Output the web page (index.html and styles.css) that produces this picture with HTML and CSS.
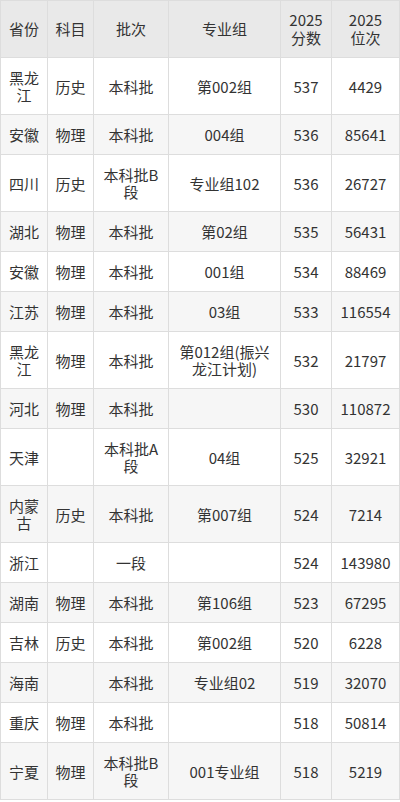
FILE: index.html
```html
<!DOCTYPE html>
<html lang="zh-CN">
<head>
<meta charset="utf-8">
<link rel="stylesheet" href="styles.css">
</head>
<body>
<table class="score-table">
  <colgroup>
    <col class="c1"><col class="c2"><col class="c3"><col class="c4"><col class="c5"><col class="c6">
  </colgroup>
  <thead>
    <tr><th>省份</th><th>科目</th><th>批次</th><th>专业组</th><th>2025<br>分数</th><th>2025<br>位次</th></tr>
  </thead>
  <tbody>
    <tr><td>黑龙江</td><td>历史</td><td>本科批</td><td>第002组</td><td>537</td><td>4429</td></tr>
    <tr><td>安徽</td><td>物理</td><td>本科批</td><td>004组</td><td>536</td><td>85641</td></tr>
    <tr><td>四川</td><td>历史</td><td>本科批B段</td><td>专业组102</td><td>536</td><td>26727</td></tr>
    <tr><td>湖北</td><td>物理</td><td>本科批</td><td>第02组</td><td>535</td><td>56431</td></tr>
    <tr><td>安徽</td><td>物理</td><td>本科批</td><td>001组</td><td>534</td><td>88469</td></tr>
    <tr><td>江苏</td><td>物理</td><td>本科批</td><td>03组</td><td>533</td><td>116554</td></tr>
    <tr><td>黑龙江</td><td>物理</td><td>本科批</td><td>第012组(振兴龙江计划)</td><td>532</td><td>21797</td></tr>
    <tr><td>河北</td><td>物理</td><td>本科批</td><td></td><td>530</td><td>110872</td></tr>
    <tr><td>天津</td><td></td><td>本科批A段</td><td>04组</td><td>525</td><td>32921</td></tr>
    <tr><td>内蒙古</td><td>历史</td><td>本科批</td><td>第007组</td><td>524</td><td>7214</td></tr>
    <tr><td>浙江</td><td></td><td>一段</td><td></td><td>524</td><td>143980</td></tr>
    <tr><td>湖南</td><td>物理</td><td>本科批</td><td>第106组</td><td>523</td><td>67295</td></tr>
    <tr><td>吉林</td><td>历史</td><td>本科批</td><td>第002组</td><td>520</td><td>6228</td></tr>
    <tr><td>海南</td><td></td><td>本科批</td><td>专业组02</td><td>519</td><td>32070</td></tr>
    <tr><td>重庆</td><td>物理</td><td>本科批</td><td></td><td>518</td><td>50814</td></tr>
    <tr><td>宁夏</td><td>物理</td><td>本科批B段</td><td>001专业组</td><td>518</td><td>5219</td></tr>
  </tbody>
</table>
</body>
</html>
```
FILE: styles.css
```css
html, body {
  margin: 0;
  padding: 0;
  background: #ffffff;
}
body {
  font-family: "Noto Sans CJK SC", "Noto Sans", sans-serif;
  font-size: 15px;
  color: #333333;
}
.score-table {
  width: 399px;
  table-layout: fixed;
  border-collapse: collapse;
}
.c1 { width: 47px; }
.c2 { width: 46px; }
.c3 { width: 75px; }
.c4 { width: 112px; }
.c5 { width: 51px; }
.c6 { width: 68px; }
.score-table th,
.score-table td {
  border: 1px solid #dddddd;
  padding: 11px 6px;
  line-height: 17px;
  text-align: center;
  vertical-align: middle;
  font-weight: normal;
  word-break: break-all;
}
.score-table th {
  background: #e9e9e9;
  padding: 10px 6px;
  line-height: 18px;
}
.score-table tbody tr:nth-child(even) td {
  background: #f6f6f6;
}
```
